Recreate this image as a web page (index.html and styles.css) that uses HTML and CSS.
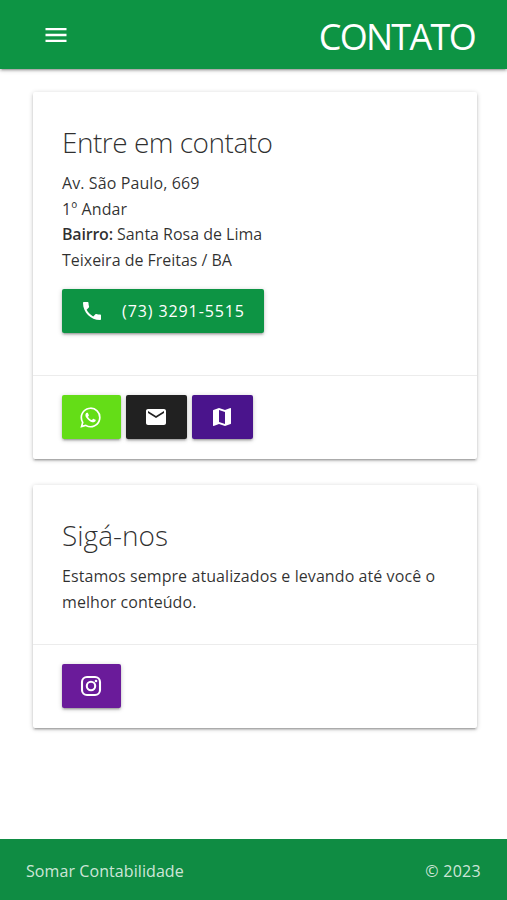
FILE: index.html
```html
<!DOCTYPE html>
<html lang="pt-br">

	<head>
		<meta charset="UTF-8">
		<meta name="viewport" content="width=device-width, initial-scale=1">
		<title>Contato</title>
		<link rel="stylesheet" href="styles.css">
	</head>

	<body>
		<nav class="navbar">
			<a class="menu" href="#" aria-label="Menu">
				<svg viewBox="0 0 24 24"><path d="M3 18h18v-2H3v2zm0-5h18v-2H3v2zm0-7v2h18V6H3z"/></svg>
			</a>
			<span class="logo">CONTATO</span>
		</nav>

		<main class="container">
			<div class="card">
				<div class="card-content">
					<h1 class="card-title">Entre em contato</h1>
					<p class="address">
						<span class="street">Av. São Paulo, 669</span><br>
						<span class="street">1º Andar</span><br>
						<b>Bairro:</b> Santa Rosa de Lima<br>
						Teixeira de Freitas / BA
					</p>
					<a class="btn btn-phone" href="#">
						<svg viewBox="0 0 24 24"><path d="M6.62 10.79c1.44 2.83 3.76 5.14 6.59 6.59l2.2-2.2c.27-.27.67-.36 1.02-.24 1.12.37 2.33.57 3.57.57.55 0 1 .45 1 1V20c0 .55-.45 1-1 1-9.39 0-17-7.61-17-17 0-.55.45-1 1-1h3.5c.55 0 1 .45 1 1 0 1.25.2 2.45.57 3.57.11.35.03.74-.25 1.02l-2.2 2.2z"/></svg>
						<span>(73) 3291-5515</span>
					</a>
				</div>
				<div class="card-action">
					<a class="btn btn-whatsapp" href="#" aria-label="WhatsApp">
						<svg viewBox="0 0 24 24"><path d="M18.403 5.633A8.919 8.919 0 0 0 12.053 3c-4.948 0-8.976 4.027-8.978 8.977 0 1.582.413 3.126 1.198 4.488L3 21.116l4.759-1.249a8.981 8.981 0 0 0 4.29 1.093h.004c4.947 0 8.975-4.027 8.977-8.977a8.926 8.926 0 0 0-2.627-6.35m-6.35 13.812h-.003a7.446 7.446 0 0 1-3.798-1.041l-.272-.162-2.824.741.753-2.753-.177-.282a7.448 7.448 0 0 1-1.141-3.971c.002-4.114 3.349-7.461 7.465-7.461a7.413 7.413 0 0 1 5.275 2.188 7.42 7.42 0 0 1 2.183 5.279c-.002 4.114-3.349 7.462-7.461 7.462m4.093-5.589c-.225-.113-1.327-.655-1.533-.73-.205-.075-.354-.112-.504.112s-.58.729-.711.879-.262.168-.486.056-.947-.349-1.804-1.113c-.667-.595-1.117-1.329-1.248-1.554s-.014-.346.099-.458c.101-.1.224-.262.336-.393.112-.131.149-.224.224-.374s.038-.281-.019-.393c-.056-.113-.505-1.217-.692-1.666-.181-.435-.366-.377-.504-.383a9.65 9.65 0 0 0-.429-.008.826.826 0 0 0-.599.28c-.206.225-.785.767-.785 1.871s.804 2.171.916 2.321c.112.15 1.582 2.415 3.832 3.387.536.231.954.369 1.279.473.537.171 1.026.146 1.413.089.431-.064 1.327-.542 1.514-1.066.187-.524.187-.973.131-1.067-.056-.094-.207-.151-.43-.263"/></svg>
					</a>
					<a class="btn btn-mail" href="#" aria-label="E-mail">
						<svg viewBox="0 0 24 24"><path d="M20 4H4c-1.1 0-1.99.9-1.99 2L2 18c0 1.1.9 2 2 2h16c1.1 0 2-.9 2-2V6c0-1.1-.9-2-2-2zm0 4l-8 5-8-5V6l8 5 8-5v2z"/></svg>
					</a>
					<a class="btn btn-map" href="#" aria-label="Mapa">
						<svg viewBox="0 0 24 24"><path d="M20.5 3l-.16.03L15 5.1 9 3 3.36 4.9c-.21.07-.36.25-.36.48V20.5c0 .28.22.5.5.5l.16-.03L9 18.9l6 2.1 5.64-1.9c.21-.07.36-.25.36-.48V3.5c0-.28-.22-.5-.5-.5zM15 19l-6-2.11V5l6 2.11V19z"/></svg>
					</a>
				</div>
			</div>

			<div class="card card-social">
				<div class="card-content">
					<h2 class="card-title">Sigá-nos</h2>
					<p>Estamos sempre atualizados e levando até você o melhor conteúdo.</p>
				</div>
				<div class="card-action">
					<a class="btn btn-instagram" href="#" aria-label="Instagram">
						<svg viewBox="0 0 24 24">
							<rect x="3" y="3" width="18" height="18" rx="5"/>
							<circle cx="12" cy="12" r="4.2"/>
							<circle class="dot" cx="17" cy="7" r="1.3"/>
						</svg>
					</a>
				</div>
			</div>
		</main>

		<footer class="footer">
			<span>Somar Contabilidade</span>
			<span class="year">© 2023</span>
		</footer>
	</body>

</html>
```
FILE: styles.css
```css
* {
	box-sizing: border-box;
}

body {
	margin: 0;
	min-height: 100vh;
	display: flex;
	flex-direction: column;
	background: #fff;
	color: rgba(0, 0, 0, .82);
	font: 16px/25.7px "Segoe UI", "Open Sans", "Noto Sans", sans-serif;
	letter-spacing: .08px;
}

a {
	color: #fff;
	text-decoration: none;
}

svg {
	display: block;
	fill: #fff;
}

h1,
h2,
p {
	margin: 0;
}

.navbar {
	height: 69px;
	padding: 0 32px 0 42px;
	display: flex;
	align-items: center;
	justify-content: space-between;
	background: #0d9444;
	color: #fff;
	box-shadow: 0 2px 2px rgba(0, 0, 0, .14), 0 3px 1px -2px rgba(0, 0, 0, .12), 0 1px 5px rgba(0, 0, 0, .2);
}

.menu svg {
	width: 28px;
	height: 28px;
}

.logo {
	font-size: 36px;
	line-height: 69px;
	letter-spacing: -1.7px;
	padding-top: 4px;
}

.container {
	flex: 1;
	padding: 23px 30px 0 33px;
}

.card {
	margin-bottom: 26px;
	border-radius: 2px;
	background: #fff;
	box-shadow: 0 2px 2px rgba(0, 0, 0, .14), 0 3px 1px -2px rgba(0, 0, 0, .12), 0 1px 5px rgba(0, 0, 0, .2);
}

.card-content {
	padding: 28px 29px;
}

.card-title {
	font-size: 28px;
	font-weight: 300;
	line-height: 44px;
	margin-bottom: 7px;
	letter-spacing: -.5px;
}

.address {
	margin-bottom: 15px;
	letter-spacing: -.02px;
}

.street {
	letter-spacing: .1px;
}

b {
	font-weight: 600;
	letter-spacing: -.2px;
}

.card-action {
	display: flex;
	gap: 5px;
	padding: 19px 29px 20px;
	border-top: 1px solid rgba(160, 160, 160, .2);
}

.card-social .card-title {
	letter-spacing: 0;
}

.card-social .card-content {
	padding-bottom: 29px;
}

.btn {
	height: 44px;
	display: flex;
	align-items: center;
	justify-content: center;
	border-radius: 2px;
	box-shadow: 0 2px 2px rgba(0, 0, 0, .14), 0 3px 1px -2px rgba(0, 0, 0, .12), 0 1px 5px rgba(0, 0, 0, .2);
}

.btn svg {
	width: 24px;
	height: 24px;
}

.btn-phone {
	width: 202px;
	gap: 18px;
	padding: 1px 1px 0 0;
	margin-bottom: 14px;
	background: #0d9444;
	letter-spacing: .9px;
}

.btn-phone span {
	padding-top: 1px;
}

.btn-whatsapp {
	width: 59px;
	padding: 1px 2px 0 0;
	background: #64dd17;
}

.btn-whatsapp svg {
	width: 27px;
	height: 27px;
}

.btn-mail {
	width: 61px;
	padding-right: 1px;
	background: #212121;
}

.btn-map {
	width: 61px;
	padding-right: 1px;
	background: #4a148c;
}

.btn-instagram {
	width: 59px;
	padding-right: 1px;
	background: #6a1b9a;
}

.btn-instagram svg {
	fill: none;
	stroke: #fff;
	stroke-width: 2.1;
}

.btn-instagram .dot {
	fill: #fff;
	stroke: none;
}

.footer {
	height: 61px;
	padding: 4px 26px 0;
	display: flex;
	align-items: center;
	justify-content: space-between;
	background: #0f8c43;
	color: rgba(255, 255, 255, .8);
}

.year {
	letter-spacing: .3px;
}
```
